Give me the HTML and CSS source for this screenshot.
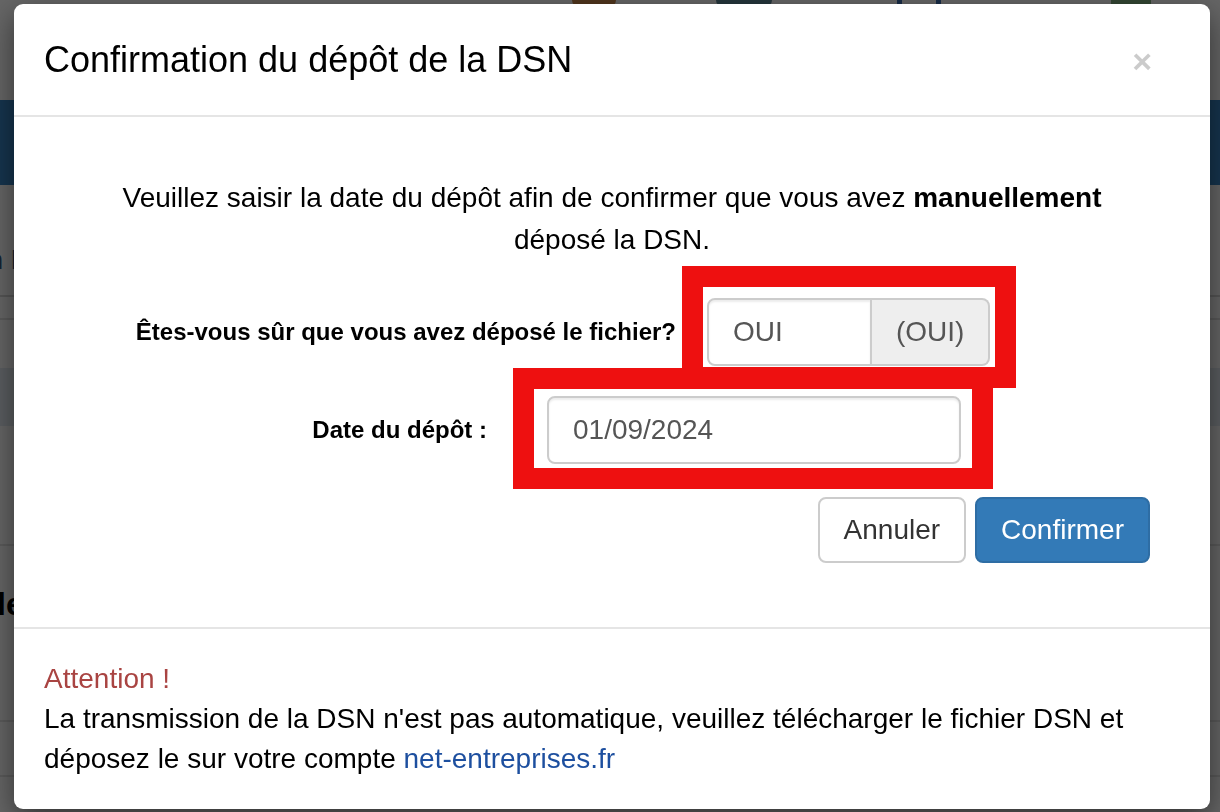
FILE: index.html
```html
<!DOCTYPE html>
<html lang="fr">
<head>
    <meta charset="UTF-8">
    <meta name="viewport" content="width=device-width, initial-scale=1.0">
    <title>Confirmation du dépôt de la DSN</title>
    <link rel="stylesheet" href="styles.css">
</head>
<body>
    <!-- page behind the modal -->
    <div class="page">
        <div class="page-top">
            <span class="logo logo-brown"></span>
            <span class="logo logo-round"></span>
            <span class="logo logo-bars"></span>
            <span class="logo logo-green"></span>
        </div>
        <div class="page-band"></div>
        <div class="page-row page-row-title"><span>on DSN</span></div>
        <div class="page-row page-row-thin"></div>
        <div class="page-gap"></div>
        <div class="page-row page-row-blue"></div>
        <div class="page-row page-row-tall"></div>
        <div class="page-row page-row-head"><span>le</span></div>
        <div class="page-row page-row-mid"></div>
        <div class="page-row"></div>
    </div>
    <div class="backdrop"></div>

    <div class="modal">
        <div class="modal-header">
            <h4 class="modal-title">Confirmation du dépôt de la DSN</h4>
            <button class="close" type="button">&times;</button>
        </div>

        <div class="modal-body">
            <p class="intro">Veuillez saisir la date du dépôt afin de confirmer que vous avez <b>manuellement</b> déposé la DSN.</p>

            <div class="form-row">
                <label class="form-label">Êtes-vous sûr que vous avez déposé le fichier?</label>
                <div class="input-group">
                    <input class="form-control" type="text" value="OUI" readonly>
                    <span class="input-addon">(OUI)</span>
                </div>
            </div>

            <div class="form-row form-row-date">
                <label class="form-label">Date du dépôt :</label>
                <input class="form-control date-input" type="text" value="01/09/2024" readonly>
            </div>

            <div class="actions">
                <button class="btn btn-default" type="button">Annuler</button>
                <button class="btn btn-primary" type="button">Confirmer</button>
            </div>
        </div>

        <div class="modal-footer">
            <span class="text-danger">Attention !</span>
            La transmission de la DSN n'est pas automatique, veuillez télécharger le fichier DSN et déposez le sur votre compte <a href="#">net-entreprises.fr</a>
        </div>

        <!-- red highlight boxes drawn on top of the screenshot -->
        <div class="mark mark-answer"></div>
        <div class="mark mark-date"></div>
    </div>
</body>
</html>
```

FILE: styles.css
```css
body {
  margin: 0;
  padding: 0;
  font-family: "Liberation Sans", Arial, sans-serif;
  font-size: 28px;
  line-height: 1.42857;
  color: #000;
  overflow: hidden;
}

/* page behind */

.page {
  height: 812px;
  background-color: #fff;
  overflow: hidden;
}

.page-top {
  height: 100px;
  display: flex;
  align-items: flex-start;
}

.logo {
  display: block;
  height: 7px;
}

.logo-brown {
  width: 44px;
  margin-left: 572px;
  background-color: #c8864a;
  border-radius: 0 0 22px 22px;
}

.logo-round {
  width: 56px;
  margin-left: 100px;
  background-color: #5d8896;
  border-radius: 0 0 28px 28px;
}

.logo-bars {
  width: 34px;
  margin-left: 125px;
  border-left: 5px solid #3c6fae;
  border-right: 5px solid #3c6fae;
}

.logo-green {
  width: 40px;
  margin-left: 170px;
  background-color: #7fb080;
}

.page-band {
  height: 85px;
  background-color: #3784c5;
}

.page-row {
  box-sizing: border-box;
  height: 110px;
  border-bottom: 2px solid #e4e4e4;
}

.page-row span {
  display: block;
  font-weight: bold;
}

.page-row-title {
  height: 112px;
  padding-top: 55px;
  border-bottom-color: #d8d8d8;
}

.page-row-title span {
  margin-left: -31px;
  color: #35587e;
}

.page-row-thin {
  height: 23px;
  border-bottom-color: #e0e0e0;
}

.page-gap {
  height: 48px;
}

.page-row-blue {
  height: 58px;
  background-color: #e3ecf3;
  border-bottom: 0;
}

.page-row-tall {
  height: 120px;
}

.page-row-head {
  height: 176px;
  padding-top: 36px;
}

.page-row-head span {
  margin-left: -3px;
  font-size: 32px;
}

.page-row-mid {
  height: 55px;
}

.backdrop {
  position: fixed;
  top: 0;
  left: 0;
  right: 0;
  bottom: 0;
  background-color: rgba(0, 0, 0, 0.6);
}

/* modal */

.modal {
  position: absolute;
  top: 4px;
  left: 14px;
  width: 1196px;
  background-color: #fff;
  border-radius: 9px;
  box-shadow: 0 10px 30px rgba(0, 0, 0, 0.5);
}

.modal-header {
  display: flex;
  justify-content: space-between;
  align-items: center;
  padding: 30px;
  border-bottom: 2px solid #e5e5e5;
}

.modal-title {
  margin: 0;
  font-size: 36px;
  font-weight: normal;
  line-height: 1.42857;
}

.close {
  margin-right: 28px;
  margin-top: 2px;
  padding: 0;
  border: 0;
  background: none;
  font-family: "Liberation Sans", Arial, sans-serif;
  font-size: 34px;
  font-weight: bold;
  line-height: 1;
  color: #000;
  opacity: 0.2;
  cursor: pointer;
}

.modal-body {
  padding: 30px 30px 64px;
}

.intro {
  max-width: 1020px;
  margin: 30px auto 37px;
  line-height: 42px;
  text-align: center;
}

.form-row {
  display: flex;
  align-items: center;
  margin-bottom: 30px;
}

.form-label {
  width: 632px;
  margin-right: 31px;
  font-size: 24px;
  font-weight: bold;
  text-align: right;
}

.form-row-date {
  margin-bottom: 33px;
}

.form-row-date .form-label {
  width: 443px;
  margin-right: 60px;
}

.form-control {
  box-sizing: border-box;
  height: 68px;
  padding: 0 24px;
  font-family: inherit;
  font-size: 28px;
  color: #555;
  background-color: #fff;
  border: 2px solid #ccc;
  border-radius: 8px;
  box-shadow: inset 0 2px 2px rgba(0, 0, 0, 0.075);
  outline: none;
}

.input-group {
  display: flex;
  width: 283px;
}

.input-group .form-control {
  width: 165px;
  border-radius: 8px 0 0 8px;
}

.input-addon {
  box-sizing: border-box;
  display: flex;
  align-items: center;
  height: 68px;
  padding: 0 24px;
  color: #555;
  background-color: #eee;
  border: 2px solid #ccc;
  border-left: 0;
  border-radius: 0 8px 8px 0;
}

.date-input {
  width: 414px;
}

.actions {
  display: flex;
  justify-content: flex-end;
  gap: 9px;
  padding-right: 30px;
}

.btn {
  box-sizing: border-box;
  height: 66px;
  padding: 0 24px;
  font-family: inherit;
  font-size: 28px;
  border: 2px solid;
  border-radius: 8px;
  cursor: pointer;
}

.btn-default {
  color: #333;
  background-color: #fff;
  border-color: #ccc;
}

.btn-primary {
  color: #fff;
  background-color: #337ab7;
  border-color: #2e6da4;
}

.modal-footer {
  padding: 30px;
  border-top: 2px solid #e5e5e5;
}

.text-danger {
  display: block;
  color: #a94442;
}

.modal-footer a {
  color: #1d4f9f;
  text-decoration: none;
}

.mark {
  position: absolute;
  box-sizing: border-box;
  border: 21px solid #ee1010;
}

.mark-answer {
  left: 668px;
  top: 262px;
  width: 334px;
  height: 122px;
}

.mark-date {
  left: 499px;
  top: 364px;
  width: 480px;
  height: 121px;
}
```
